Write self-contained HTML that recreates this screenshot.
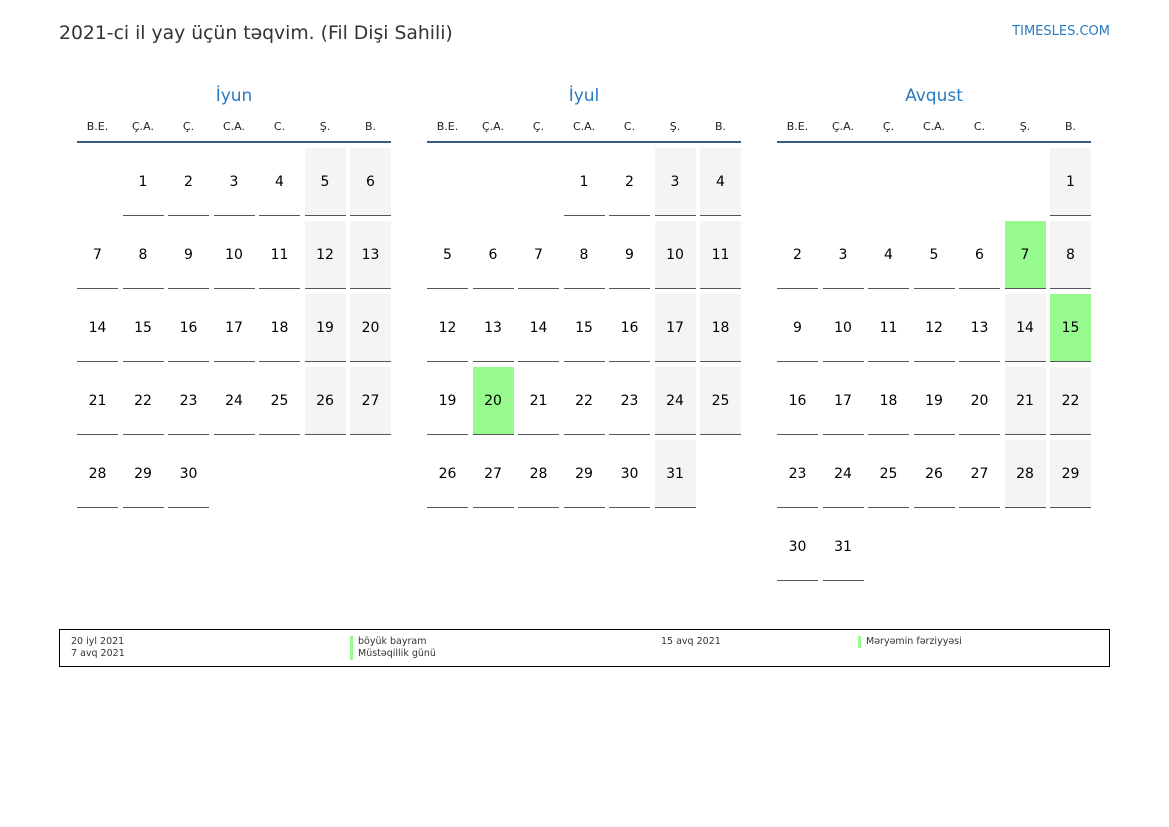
<!DOCTYPE html>
<html><head><meta charset="utf-8"><style>
body{margin:0;width:1169px;height:827px;background:#fff;font-family:"DejaVu Sans","Liberation Sans",sans-serif;position:relative;overflow:hidden;color:#000}
.t{position:absolute;left:59px;top:23px;font-size:18.8px;color:#333}
.s{position:absolute;right:59px;top:24px;font-size:13px;color:#2a7ac0}
.m{position:absolute;top:85px;width:314px}
.mn{text-align:center;font-size:17px;color:#2a7ac0;height:23px;line-height:22px}
.hd{display:grid;grid-template-columns:repeat(7,41px);column-gap:4.5px;font-size:11px;text-align:center;height:33px;line-height:37px;border-bottom:2px solid #3b5a82;color:#222}
.g{display:grid;grid-template-columns:repeat(7,41px);column-gap:4.5px;row-gap:5px;margin-top:5px}
.g b,.g i{box-sizing:border-box;height:68px;font-weight:normal;font-style:normal;font-size:14px;line-height:68px;text-align:center;display:block}
.g b{border-bottom:1.5px solid #555}
.g b.w{background:#f4f4f4}
.g b.h{background:#98fb8f}
.lg{position:absolute;left:59px;top:629px;width:1049px;height:36px;border:1px solid #000;font-size:9.5px;color:#333}
.lg div{position:absolute;top:6px;line-height:12px}
.bar{border-left:3px solid #98fb8f;padding-left:5px}
</style></head><body>
<div class="t">2021-ci il yay üçün təqvim. (Fil Dişi Sahili)</div>
<div class="s">TIMESLES.COM</div>

<div class="m" style="left:77px"><div class="mn">İyun</div>
<div class="hd"><span>B.E.</span><span>Ç.A.</span><span>Ç.</span><span>C.A.</span><span>C.</span><span>Ş.</span><span>B.</span></div>
<div class="g">
<i></i><b>1</b><b>2</b><b>3</b><b>4</b><b class="w">5</b><b class="w">6</b>
<b>7</b><b>8</b><b>9</b><b>10</b><b>11</b><b class="w">12</b><b class="w">13</b>
<b>14</b><b>15</b><b>16</b><b>17</b><b>18</b><b class="w">19</b><b class="w">20</b>
<b>21</b><b>22</b><b>23</b><b>24</b><b>25</b><b class="w">26</b><b class="w">27</b>
<b>28</b><b>29</b><b>30</b>
</div></div>

<div class="m" style="left:427px"><div class="mn">İyul</div>
<div class="hd"><span>B.E.</span><span>Ç.A.</span><span>Ç.</span><span>C.A.</span><span>C.</span><span>Ş.</span><span>B.</span></div>
<div class="g">
<i></i><i></i><i></i><b>1</b><b>2</b><b class="w">3</b><b class="w">4</b>
<b>5</b><b>6</b><b>7</b><b>8</b><b>9</b><b class="w">10</b><b class="w">11</b>
<b>12</b><b>13</b><b>14</b><b>15</b><b>16</b><b class="w">17</b><b class="w">18</b>
<b>19</b><b class="h">20</b><b>21</b><b>22</b><b>23</b><b class="w">24</b><b class="w">25</b>
<b>26</b><b>27</b><b>28</b><b>29</b><b>30</b><b class="w">31</b>
</div></div>

<div class="m" style="left:777px"><div class="mn">Avqust</div>
<div class="hd"><span>B.E.</span><span>Ç.A.</span><span>Ç.</span><span>C.A.</span><span>C.</span><span>Ş.</span><span>B.</span></div>
<div class="g">
<i></i><i></i><i></i><i></i><i></i><i></i><b class="w">1</b>
<b>2</b><b>3</b><b>4</b><b>5</b><b>6</b><b class="h">7</b><b class="w">8</b>
<b>9</b><b>10</b><b>11</b><b>12</b><b>13</b><b class="w">14</b><b class="h">15</b>
<b>16</b><b>17</b><b>18</b><b>19</b><b>20</b><b class="w">21</b><b class="w">22</b>
<b>23</b><b>24</b><b>25</b><b>26</b><b>27</b><b class="w">28</b><b class="w">29</b>
<b>30</b><b>31</b>
</div></div>

<div class="lg">
<div style="left:11px">20 iyl 2021<br>7 avq 2021</div>
<div style="left:290px" class="bar">böyük bayram</div>
<div style="left:290px;top:18px" class="bar">Müstəqillik günü</div>
<div style="left:601px">15 avq 2021</div>
<div style="left:798px" class="bar">Məryəmin fərziyyəsi</div>
</div>
</body></html>
